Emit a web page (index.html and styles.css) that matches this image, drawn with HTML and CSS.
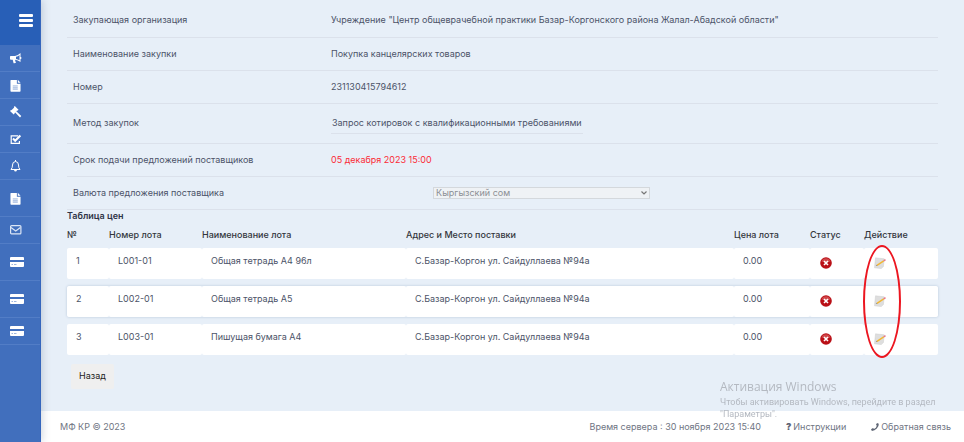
FILE: index.html
```html
<!DOCTYPE html>
<html lang="ru">

<head>
    <meta charset="UTF-8">
    <meta name="viewport" content="width=device-width, initial-scale=1.0">
    <title>Таблица цен</title>
    <link rel="stylesheet" href="styles.css">
</head>

<body>
    <!-- icons used more than once -->
    <svg class="sprite" aria-hidden="true">
        <symbol id="file" viewBox="0 0 12 14">
            <path fill="#fff" d="M1 1H7.500v4h4v8a.8.8 0 0 1-.8.8H1.300A.8.8 0 0 1 .5 13V1.500zM8.500.8l3 3.200h-3z" />
            <path stroke="#8fabd9" d="M3 7.500h5.500M3 9.500h5.500M3 11h5.500" />
        </symbol>
        <symbol id="card" viewBox="0 0 14 10">
            <path fill="#fff" d="M1 0h12a1 1 0 0 1 1 1v2H0V1a1 1 0 0 1 1-1zM0 5h14v4a1 1 0 0 1-1 1H1a1 1 0 0 1-1-1z" />
            <path stroke="#9db6df" d="M1.500 7.500h1.500M4 7.500h2.500" />
        </symbol>
        <symbol id="cross" viewBox="0 0 12 12">
            <circle cx="6" cy="6" r="5.800" fill="#b90f16" />
            <path fill="#df6a6c" d="M1.500 4.500a4.800 4.800 0 0 1 9 0Q6 6 1.500 4.500z" opacity=".6" />
            <path stroke="#fff" stroke-width="1.600" d="M4 4l4 4M8 4L4 8" />
        </symbol>
        <symbol id="edit" viewBox="0 0 12 12">
            <path fill="#dedede" stroke="#cfcfcf" stroke-width=".5" d="M1.500.8l8.700 1-.8 7.800-2.200 2-6.700-.8z" />
            <path stroke="#f2b632" stroke-width="1.500" d="M3 8.300L9.700 3.800" />
            <path stroke="#e8788a" stroke-width="1.500" d="M9.700 3.800l1.800-1.200" />
            <path fill="#777" d="M1.900 9l.8-1.200.6 1z" />
        </symbol>
    </svg>

    <div class="layout">
        <nav class="sidebar">
            <button class="menu" aria-label="Меню"><span></span><span></span><span></span></button>
            <a href="#" aria-label="Объявления"><svg width="12" height="12" viewBox="0 0 12 12"><path fill="#fff" fill-rule="evenodd" d="M0 4.500Q0 4 .8 4H5Q8 3.500 10.500 1V5q1 0 1 1t-1 1v3Q8 8 5.200 7.800q-.4 1 .8 2.600-.5 1-2.400.8L2.700 7.800H1Q0 7.800 0 7zM6 4.800v2.200q2 .2 3.500 1.300V3Q8 4.500 6 4.800z" /></svg></a>
            <a href="#" aria-label="Документы"><svg width="11" height="13"><use href="#file" /></svg></a>
            <a href="#" aria-label="Торги"><svg width="12" height="12" viewBox="0 0 12 12"><path fill="#fff" d="M4.800 0l3.700 3.700-1 1-.4-.3-.8.900 5 4.600-1.300 1.500L5.200 6.400l-.8.8.3.4-1 1L0 4.900l1-1 .4.300L4.200 1.400 3.800 1z" /></svg></a>
            <a href="#" aria-label="Задачи"><svg width="12" height="11" viewBox="0 0 12 11"><path fill="none" stroke="#fff" stroke-width="1.200" d="M9.400 7v2.400H1.200V1.800h7" /><path fill="none" stroke="#fff" stroke-width="2" d="M3 4.500l2.200 2.300 5.200-5.300" /></svg></a>
            <a href="#" aria-label="Уведомления"><svg width="11" height="12" viewBox="0 0 11 12"><path fill="none" stroke="#fff" d="M1 9.500Q2.500 8 2.500 5q0-3.200 3-3.500 3 .3 3 3.500 0 3 1.500 4.500zM5.500 0v1.500" /><path fill="#fff" d="M4 10h3q-.3 1.500-1.500 1.500T4 10z" /></svg></a>
            <a href="#" class="tall" aria-label="Договоры"><svg width="11" height="13"><use href="#file" /></svg></a>
            <a href="#" aria-label="Сообщения"><svg width="12" height="10" viewBox="0 0 12 10"><rect x=".6" y=".6" width="10.300" height="8.300" rx="1" fill="none" stroke="#dce6f6" stroke-width="1.200" /><path fill="none" stroke="#dce6f6" stroke-width="1.200" d="M1 2.500l4.700 3.500 4.700-3.500" /></svg></a>
            <a href="#" class="tall" aria-label="Оплата"><svg width="14" height="10"><use href="#card" /></svg></a>
            <a href="#" class="tall" aria-label="Счета"><svg width="14" height="10"><use href="#card" /></svg></a>
            <a href="#" aria-label="Платежи"><svg width="14" height="10"><use href="#card" /></svg></a>
        </nav>

        <div class="page">
            <main class="content">
                <table class="details">
                    <tr>
                        <th scope="row">Закупающая организация</th>
                        <td>Учреждение "Центр общеврачебной практики Базар-Коргонского района Жалал-Абадской области"</td>
                    </tr>
                    <tr>
                        <th scope="row">Наименование закупки</th>
                        <td>Покупка канцелярских товаров</td>
                    </tr>
                    <tr>
                        <th scope="row">Номер</th>
                        <td>231130415794612</td>
                    </tr>
                    <tr class="method">
                        <th scope="row">Метод закупок</th>
                        <td><span>Запрос котировок с квалификационными требованиями</span></td>
                    </tr>
                    <tr>
                        <th scope="row">Срок подачи предложений поставщиков</th>
                        <td class="deadline">05 декабря 2023 15:00</td>
                    </tr>
                    <tr>
                        <th scope="row"><label for="currency">Валюта предложения поставщика</label></th>
                        <td class="currency">
                            <div class="select">
                                <select id="currency" disabled>
                                    <option>Кыргызский сом</option>
                                </select>
                                <svg width="6" height="4" viewBox="0 0 6 4"><path fill="none" stroke="#777" stroke-width="1.200" d="M.5.5L3 3 5.500.5" /></svg>
                            </div>
                        </td>
                    </tr>
                </table>

                <h2>Таблица цен</h2>
                <div class="prices-wrap">
                    <table class="prices">
                        <colgroup>
                            <col class="c-num"><col class="c-lot"><col class="c-name"><col class="c-addr">
                            <col class="c-price"><col class="c-status"><col>
                        </colgroup>
                        <thead>
                            <tr>
                                <th>№</th>
                                <th>Номер лота</th>
                                <th>Наименование лота</th>
                                <th>Адрес и Место поставки</th>
                                <th>Цена лота</th>
                                <th>Статус</th>
                                <th>Действие</th>
                            </tr>
                        </thead>
                        <tbody>
                            <tr>
                                <td>1</td>
                                <td>L001-01</td>
                                <td>Общая тетрадь А4 96л</td>
                                <td>С.Базар-Коргон ул. Сайдуллаева №94а</td>
                                <td>0.00</td>
                                <td><svg width="12" height="12"><use href="#cross" /></svg></td>
                                <td><button class="edit" aria-label="Изменить"><svg width="12" height="12"><use href="#edit" /></svg></button></td>
                            </tr>
                            <tr class="active">
                                <td>2</td>
                                <td>L002-01</td>
                                <td>Общая тетрадь А5</td>
                                <td>С.Базар-Коргон ул. Сайдуллаева №94а</td>
                                <td>0.00</td>
                                <td><svg width="12" height="12"><use href="#cross" /></svg></td>
                                <td><button class="edit" aria-label="Изменить"><svg width="12" height="12"><use href="#edit" /></svg></button></td>
                            </tr>
                            <tr>
                                <td>3</td>
                                <td>L003-01</td>
                                <td>Пишущая бумага А4</td>
                                <td>С.Базар-Коргон ул. Сайдуллаева №94а</td>
                                <td>0.00</td>
                                <td><svg width="12" height="12"><use href="#cross" /></svg></td>
                                <td><button class="edit" aria-label="Изменить"><svg width="12" height="12"><use href="#edit" /></svg></button></td>
                            </tr>
                        </tbody>
                    </table>
                    <div class="marker"></div>
                </div>
                <button class="back">Назад</button>
            </main>

            <footer class="footer">
                <span>МФ КР © 2023</span>
                <div class="footer-right">
                    <span>Время сервера : 30 ноября 2023 15:40</span>
                    <a href="#"><b>?</b> Инструкции</a>
                    <a href="#"><svg width="8" height="8" viewBox="0 0 8 8"><path fill="#5f6675" d="M6 0l1.800.7Q8 3.500 5.800 5.600T.9 8L0 6.200 2 5l1 .9Q5.300 5 5.800 2.700L5 1.800z" /></svg> Обратная связь</a>
                </div>
            </footer>
        </div>
    </div>

    <div class="watermark">
        <p class="watermark-title">Активация Windows</p>
        <p>Чтобы активировать Windows, перейдите в раздел "Параметры".</p>
    </div>
</body>

</html>
```
FILE: styles.css
```css
* {
    box-sizing: border-box;
}

body {
    margin: 0;
    font-family: Inter, Roboto, sans-serif;
    font-size: 9px;
    line-height: 12px;
    color: #4c5368;
    background-color: #e7eff8;
}

button,
select {
    font-family: inherit;
    font-size: inherit;
    line-height: inherit;
}

svg {
    display: block;
}

.sprite {
    position: absolute;
    width: 0;
    height: 0;
}

.layout {
    display: flex;
    min-height: 100vh;
}

/* sidebar */
.sidebar {
    display: flex;
    flex-direction: column;
    flex: 0 0 41px;
    background-color: #416fbd;
    border-right: 1px solid #3566bd;
    box-shadow: 1px 0 8px rgba(60, 80, 110, 0.25);
    z-index: 1;
}

.sidebar a {
    display: flex;
    align-items: center;
    height: 27px;
    padding-left: 10px;
    border-bottom: 1px solid #527dc6;
}

.sidebar a.tall {
    height: 37px;
}

.menu {
    display: flex;
    flex-direction: column;
    align-items: flex-end;
    gap: 2px;
    height: 45px;
    padding: 14px 7px 0 0;
    border: none;
    background-color: #285fb7;
    cursor: pointer;
}

.menu span {
    width: 14px;
    height: 3px;
    background-color: #fff;
    border-radius: 1px;
}

/* page */
.page {
    display: flex;
    flex-direction: column;
    flex: 1;
    min-width: 0;
}

.content {
    flex: 1;
    padding: 4px 26px 22px;
}

.details {
    width: 100%;
    border-collapse: collapse;
}

.details th,
.details td {
    height: 33px;
    padding: 0 6px;
    border-bottom: 1px solid #dbe1eb;
    font-weight: 400;
    text-align: left;
}

.details th {
    width: 258px;
}

.details .method td {
    height: 40px;
}

.method span {
    display: inline-block;
    padding: 4px 1px;
    border-bottom: 1px solid #dbe1eb;
}

.details .deadline {
    color: #fb2a36;
}

.details .currency {
    padding-left: 108px;
}

.select {
    position: relative;
    width: 217px;
}

.select select {
    display: block;
    width: 100%;
    height: 12px;
    padding: 0 2px;
    border: 1px solid #d4d8dc;
    color: #8c8f94;
    background-color: #eff2f5;
    line-height: 10px;
    opacity: 1;
    appearance: none;
}

.select svg {
    position: absolute;
    top: 4px;
    right: 3px;
}

h2 {
    margin: 0;
    font-size: 9px;
    font-weight: 600;
    color: #2f3447;
}

.prices-wrap {
    position: relative;
}

.prices {
    width: 100%;
    table-layout: fixed;
    border-collapse: separate;
    border-spacing: 0 7px;
}

.prices .c-num {
    width: 42px;
}

.prices .c-lot {
    width: 93px;
}

.prices .c-name {
    width: 204px;
}

.prices .c-addr {
    width: 328px;
}

.prices .c-price {
    width: 76px;
}

.prices .c-status {
    width: 54px;
}

.prices th {
    padding: 0;
    font-weight: 500;
    text-align: left;
    color: #33363c;
}

.prices td {
    height: 31px;
    padding: 0 9px 4px;
    background-color: #fff;
    border-radius: 2px;
}

.prices td svg {
    margin-top: 4px;
}

.prices td:nth-child(n+6) {
    padding-left: 10px;
}

.active {
    border-radius: 3px;
    box-shadow: 0 0 2px 1px #d0dce9;
}

.edit {
    display: block;
    padding: 0;
    border: none;
    background: none;
    cursor: pointer;
}

/* red outline around the edit buttons */
.marker {
    position: absolute;
    top: 23px;
    right: 37px;
    width: 38px;
    height: 113px;
    border: 2px solid #ec1620;
    border-radius: 50%;
    pointer-events: none;
}

.back {
    display: block;
    height: 25px;
    margin: 2px 0 0 4px;
    padding: 0 8px;
    border: none;
    border-radius: 2px;
    color: #222;
    background-color: #efefef;
}

.footer {
    display: flex;
    justify-content: space-between;
    align-items: center;
    height: 31px;
    padding: 0 13px 0 19px;
    background-color: #fff;
    color: #6f7583;
}

.footer-right {
    display: flex;
    gap: 25px;
}

.footer a {
    display: flex;
    align-items: center;
    gap: 2px;
    color: inherit;
    text-decoration: none;
}

.footer b {
    color: #5f6675;
    font-weight: 900;
}

.watermark {
    position: fixed;
    right: 16px;
    bottom: 22px;
    width: 228px;
    z-index: 2;
    font-family: Roboto, "Open Sans", sans-serif;
    color: #b4b9c1;
    pointer-events: none;
}

.watermark p {
    margin: 0;
}

.watermark .watermark-title {
    font-family: "Open Sans", "Noto Sans", sans-serif;
    font-size: 12px;
    line-height: 18px;
}
```
